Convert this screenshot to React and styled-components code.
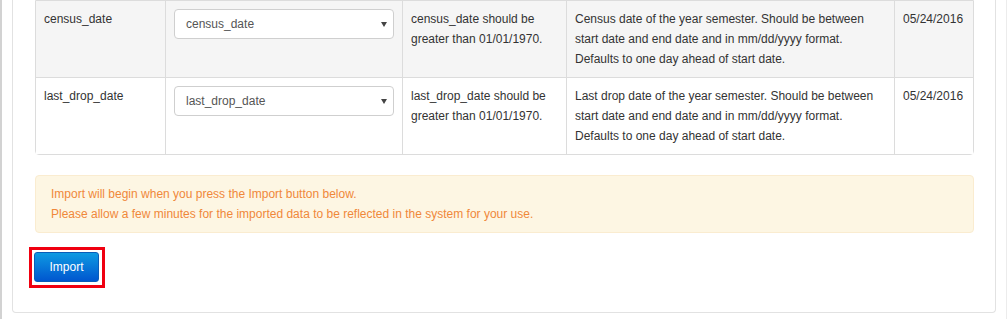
import React from "react";
import styled, { createGlobalStyle } from "styled-components";

const GlobalStyle = createGlobalStyle`
  body {
    margin: 0;
    background: #fff;
    font-family: "Liberation Sans", Arial, sans-serif;
    font-size: 12px;
    color: #333;
  }
`;

const Page = styled.div`
  width: 1007px;
  height: 319px;
  box-sizing: border-box;
  border-left: 2px solid #d2d2d2;
  border-right: 1px solid #ececec;
  padding: 0 10px;
  overflow: hidden;
`;

const Panel = styled.div`
  border: 1px solid #e2e2e2;
  border-top: none;
  border-radius: 0 0 4px 4px;
  padding: 0 21px 24px 22px;
`;

const Table = styled.div`
  border: 1px solid #dcdcdc;
  border-radius: 0 0 4px 4px;
`;

const Row = styled.div`
  display: grid;
  grid-template-columns: 129px 237px 164px 328px 1fr;
  background: ${(p) => (p.$striped ? "#f5f5f5" : "#fff")};
  & + & {
    border-top: 1px solid #dcdcdc;
  }
`;

const Cell = styled.div`
  padding: 8px;
  line-height: 20px;
  & + & {
    border-left: 1px solid #dcdcdc;
  }
`;

const SelectBox = styled.div`
  position: relative;
  height: 30px;
  box-sizing: border-box;
  border: 1px solid #cfcfcf;
  border-radius: 4px;
  background: #fff;
  padding: 0 11px;
  line-height: 28px;
  color: #555;

  &::after {
    content: "";
    position: absolute;
    right: 6px;
    top: 12px;
    border-left: 3px solid transparent;
    border-right: 3px solid transparent;
    border-top: 5px solid #444;
  }
`;

const Alert = styled.div`
  margin-top: 20px;
  padding: 8px 15px;
  line-height: 20px;
  background: #fdf6e3;
  border: 1px solid #faecd0;
  border-radius: 4px;
  color: #f0883a;
`;

const Highlight = styled.div`
  display: inline-block;
  margin: 14px 0 0 -6px;
  border: 3px solid #f00010;
  padding: 2px 3px 3px 2px;
  line-height: 0;
`;

const ImportButton = styled.button`
  width: 65px;
  height: 30px;
  padding: 0;
  border: 1px solid #0a5cb8;
  border-radius: 3px;
  background: linear-gradient(#0e9ae2, #0056cf);
  color: #fff;
  font-family: "Liberation Sans", Arial, sans-serif;
  font-size: 12px;
  cursor: pointer;
`;

const rows = [
  {
    field: "census_date",
    rule: ["census_date should be", "greater than 01/01/1970."],
    desc: [
      "Census date of the year semester. Should be between",
      "start date and end date and in mm/dd/yyyy format.",
      "Defaults to one day ahead of start date.",
    ],
    sample: "05/24/2016",
  },
  {
    field: "last_drop_date",
    rule: ["last_drop_date should be", "greater than 01/01/1970."],
    desc: [
      "Last drop date of the year semester. Should be between",
      "start date and end date and in mm/dd/yyyy format.",
      "Defaults to one day ahead of start date.",
    ],
    sample: "05/24/2016",
  },
];

const Lines = ({ lines }) =>
  lines.map((l, i) => (
    <React.Fragment key={i}>
      {l}
      {i < lines.length - 1 && <br />}
    </React.Fragment>
  ));

export default function App() {
  return (
    <>
      <GlobalStyle />
      <Page>
        <Panel>
          <Table>
            {rows.map((r, i) => (
              <Row key={r.field} $striped={i % 2 === 0}>
                <Cell>{r.field}</Cell>
                <Cell>
                  <SelectBox>{r.field}</SelectBox>
                </Cell>
                <Cell>
                  <Lines lines={r.rule} />
                </Cell>
                <Cell>
                  <Lines lines={r.desc} />
                </Cell>
                <Cell>{r.sample}</Cell>
              </Row>
            ))}
          </Table>
          <Alert>
            Import will begin when you press the Import button below.
            <br />
            Please allow a few minutes for the imported data to be reflected in the system for your use.
          </Alert>
          <Highlight>
            <ImportButton>Import</ImportButton>
          </Highlight>
        </Panel>
      </Page>
    </>
  );
}
